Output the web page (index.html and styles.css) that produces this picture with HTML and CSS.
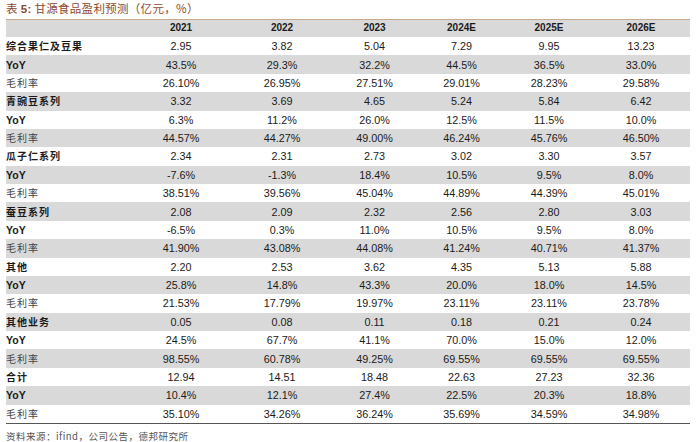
FILE: index.html
```html
<!DOCTYPE html>
<html lang="zh">
<head>
<meta charset="utf-8">
<link rel="stylesheet" href="styles.css">
</head>
<body>
<div class="page">
  <div class="title">表 <b class="num">5:</b> 甘源食品盈利预测（亿元，%）</div>
  <div class="tbl">
    <div class="row head"><span></span><span>2021</span><span>2022</span><span>2023</span><span>2024E</span><span>2025E</span><span>2026E</span></div>
    <div class="row"><span class="cat">综合果仁及豆果</span><span>2.95</span><span>3.82</span><span>5.04</span><span>7.29</span><span>9.95</span><span>13.23</span></div>
    <div class="row g"><span class="yoy">YoY</span><span>43.5%</span><span>29.3%</span><span>32.2%</span><span>44.5%</span><span>36.5%</span><span>33.0%</span></div>
    <div class="row"><span class="gm">毛利率</span><span>26.10%</span><span>26.95%</span><span>27.51%</span><span>29.01%</span><span>28.23%</span><span>29.58%</span></div>
    <div class="row g"><span class="cat">青豌豆系列</span><span>3.32</span><span>3.69</span><span>4.65</span><span>5.24</span><span>5.84</span><span>6.42</span></div>
    <div class="row"><span class="yoy">YoY</span><span>6.3%</span><span>11.2%</span><span>26.0%</span><span>12.5%</span><span>11.5%</span><span>10.0%</span></div>
    <div class="row g"><span class="gm">毛利率</span><span>44.57%</span><span>44.27%</span><span>49.00%</span><span>46.24%</span><span>45.76%</span><span>46.50%</span></div>
    <div class="row"><span class="cat">瓜子仁系列</span><span>2.34</span><span>2.31</span><span>2.73</span><span>3.02</span><span>3.30</span><span>3.57</span></div>
    <div class="row g"><span class="yoy">YoY</span><span>-7.6%</span><span>-1.3%</span><span>18.4%</span><span>10.5%</span><span>9.5%</span><span>8.0%</span></div>
    <div class="row"><span class="gm">毛利率</span><span>38.51%</span><span>39.56%</span><span>45.04%</span><span>44.89%</span><span>44.39%</span><span>45.01%</span></div>
    <div class="row g"><span class="cat">蚕豆系列</span><span>2.08</span><span>2.09</span><span>2.32</span><span>2.56</span><span>2.80</span><span>3.03</span></div>
    <div class="row"><span class="yoy">YoY</span><span>-6.5%</span><span>0.3%</span><span>11.0%</span><span>10.5%</span><span>9.5%</span><span>8.0%</span></div>
    <div class="row g"><span class="gm">毛利率</span><span>41.90%</span><span>43.08%</span><span>44.08%</span><span>41.24%</span><span>40.71%</span><span>41.37%</span></div>
    <div class="row"><span class="cat">其他</span><span>2.20</span><span>2.53</span><span>3.62</span><span>4.35</span><span>5.13</span><span>5.88</span></div>
    <div class="row g"><span class="yoy">YoY</span><span>25.8%</span><span>14.8%</span><span>43.3%</span><span>20.0%</span><span>18.0%</span><span>14.5%</span></div>
    <div class="row"><span class="gm">毛利率</span><span>21.53%</span><span>17.79%</span><span>19.97%</span><span>23.11%</span><span>23.11%</span><span>23.78%</span></div>
    <div class="row g"><span class="cat">其他业务</span><span>0.05</span><span>0.08</span><span>0.11</span><span>0.18</span><span>0.21</span><span>0.24</span></div>
    <div class="row"><span class="yoy">YoY</span><span>24.5%</span><span>67.7%</span><span>41.1%</span><span>70.0%</span><span>15.0%</span><span>12.0%</span></div>
    <div class="row g"><span class="gm">毛利率</span><span>98.55%</span><span>60.78%</span><span>49.25%</span><span>69.55%</span><span>69.55%</span><span>69.55%</span></div>
    <div class="row"><span class="cat">合计</span><span>12.94</span><span>14.51</span><span>18.48</span><span>22.63</span><span>27.23</span><span>32.36</span></div>
    <div class="row g"><span class="yoy">YoY</span><span>10.4%</span><span>12.1%</span><span>27.4%</span><span>22.5%</span><span>20.3%</span><span>18.8%</span></div>
    <div class="row"><span class="gm">毛利率</span><span>35.10%</span><span>34.26%</span><span>36.24%</span><span>35.69%</span><span>34.59%</span><span>34.98%</span></div>
  </div>
  <div class="source">资料来源：ifind，公司公告，德邦研究所</div>
</div>
</body>
</html>
```
FILE: styles.css
```css
html, body {
  margin: 0;
  padding: 0;
  background: #ffffff;
}
.page {
  width: 700px;
  height: 442px;
  padding: 1px 10px 0 6px;
  box-sizing: border-box;
  font-family: "Liberation Sans", Arial, "Noto Sans CJK SC", sans-serif;
}
.title {
  height: 17.5px;
  line-height: 15px;
  font-size: 11.5px;
  color: #8e4a2e;
  font-family: "Noto Sans CJK SC", sans-serif;
  letter-spacing: 0.3px;
}
.title .num {
  font-family: "Liberation Sans", Arial, sans-serif;
  font-weight: bold;
}
.tbl {
  width: 684px;
  font-size: 10.8px;
  color: #1a1a1a;
  border-top: 1.5px solid #c8a88a;
  border-bottom: 1.5px solid #555555;
}
.row {
  display: grid;
  grid-template-columns: 124px 102px 100px 85px 89px 86px 98px;
  height: 18.38px;
  align-items: center;
}
.row > span {
  text-align: center;
  white-space: nowrap;
  line-height: 14px;
}
.row.head {
  height: 17.5px;
  background: #d9d9d9;
  font-size: 10px;
  font-weight: bold;
}
.row.g {
  background: #d9d9d9;
}
.row > .cat, .row > .yoy, .row > .gm {
  text-align: left;
}
.cat {
  font-family: "Noto Sans CJK SC", sans-serif;
  font-weight: bold;
  font-size: 10px;
  letter-spacing: 1px;
}
.yoy {
  font-weight: bold;
  font-size: 10.5px;
}
.gm {
  font-family: "Noto Sans CJK SC", sans-serif;
  font-size: 10px;
  color: #444444;
  letter-spacing: 1px;
}
.source {
  padding-top: 6px;
  font-family: "Noto Sans CJK SC", sans-serif;
  font-size: 9.5px;
  line-height: 12px;
  color: #555555;
  letter-spacing: 0.5px;
}
```
